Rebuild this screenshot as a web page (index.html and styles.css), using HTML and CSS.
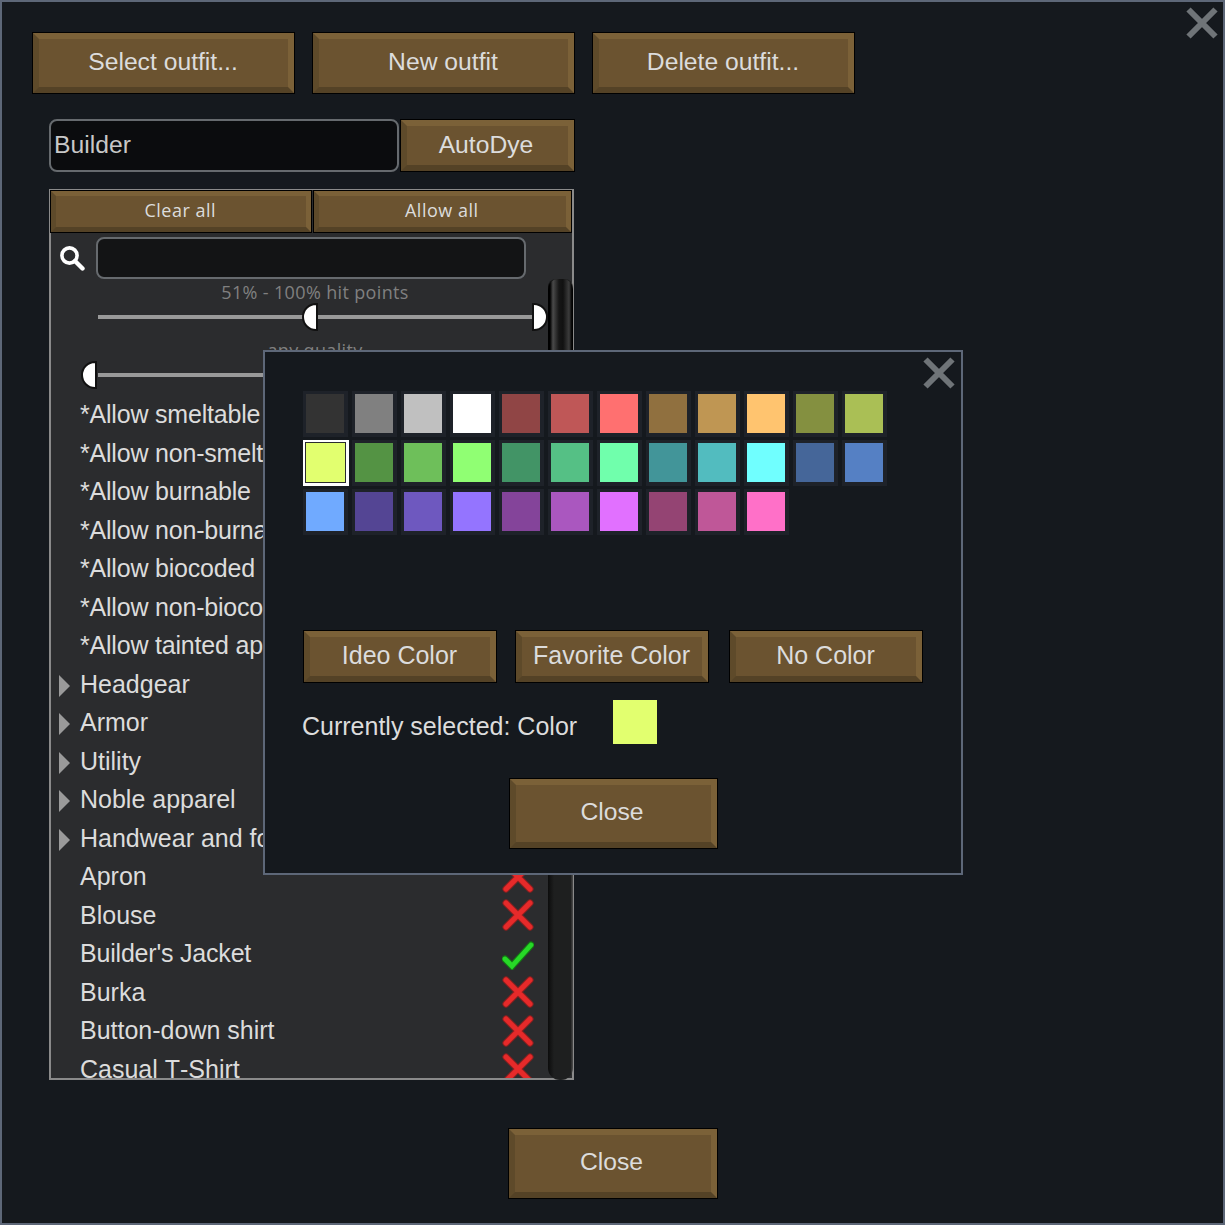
FILE: index.html
```html
<!DOCTYPE html>
<html lang="en">
<head>
<meta charset="utf-8">
<title>Outfits</title>
<link rel="stylesheet" href="styles.css">
</head>
<body>
<svg class="defs" width="0" height="0" aria-hidden="true">
  <defs>
    <symbol id="cross" viewBox="0 0 32 32">
      <path d="M4 4 L28 28 M28 4 L4 28" stroke="#8e1f1f" stroke-width="7" stroke-linecap="round" fill="none"/>
      <path d="M4 4 L28 28 M28 4 L4 28" stroke="#e62a2a" stroke-width="5" stroke-linecap="round" fill="none"/>
    </symbol>
    <symbol id="check" viewBox="0 0 32 32">
      <path d="M3 21 L10 28 L29 7" stroke="#137a13" stroke-width="7" stroke-linecap="round" stroke-linejoin="miter" fill="none"/>
      <path d="M3 21 L10 28 L29 7" stroke="#27d827" stroke-width="4.8" stroke-linecap="round" stroke-linejoin="miter" fill="none"/>
    </symbol>
    <symbol id="closex" viewBox="0 0 34 34">
      <path d="M3.5 3.5 L30.5 30.5 M30.5 3.5 L3.5 30.5" stroke="#6f7478" stroke-width="6" fill="none"/>
    </symbol>
    <symbol id="arrow" viewBox="0 0 11 22">
      <polygon points="0,0 11,11 0,22" fill="#9a9a9a"/>
    </symbol>
  </defs>
</svg>

<main class="window">
  <svg class="window-x"><use href="#closex"/></svg>

  <div class="top-row">
    <button class="btn btn-top">Select outfit...</button>
    <button class="btn btn-top">New outfit</button>
    <button class="btn btn-top">Delete outfit...</button>
  </div>

  <div class="name-row">
    <div class="name-field">Builder</div>
    <button class="btn btn-autodye">AutoDye</button>
  </div>

  <section class="panel">
    <div class="panel-actions">
      <button class="btn btn-small btn-clear">Clear all</button>
      <button class="btn btn-small btn-allow">Allow all</button>
    </div>
    <div class="search-row">
      <svg class="search-icon" viewBox="0 0 26 26">
        <circle cx="10.5" cy="10.5" r="7.6" fill="none" stroke="#fff" stroke-width="3.6"/>
        <path d="M16 16 L23.5 23.5" stroke="#fff" stroke-width="4.4" stroke-linecap="round"/>
      </svg>
      <div class="search-field"></div>
    </div>
    <div class="panel-body">
      <div class="tree">
        <div class="slider">
          <div class="slider-label">51% - 100% hit points</div>
          <div class="track">
            <span class="knob knob-left" style="left:46.2%"></span>
            <span class="knob knob-right" style="left:98.2%"></span>
          </div>
        </div>
        <div class="slider">
          <div class="slider-label">any quality</div>
          <div class="track">
            <span class="knob knob-left" style="left:-3.8%"></span>
          </div>
        </div>
        <div class="row tight"><span class="slot"></span><span class="label">*Allow smeltable apparel</span></div>
        <div class="row tight"><span class="slot"></span><span class="label">*Allow non-smeltable</span></div>
        <div class="row tight"><span class="slot"></span><span class="label">*Allow burnable</span></div>
        <div class="row tight"><span class="slot"></span><span class="label">*Allow non-burnable</span></div>
        <div class="row tight"><span class="slot"></span><span class="label">*Allow biocoded</span></div>
        <div class="row tight"><span class="slot"></span><span class="label">*Allow non-biocoded</span></div>
        <div class="row tight"><span class="slot"></span><span class="label">*Allow tainted apparel</span></div>
        <div class="row"><span class="slot"><svg class="arrow"><use href="#arrow"/></svg></span><span class="label">Headgear</span></div>
        <div class="row"><span class="slot"><svg class="arrow"><use href="#arrow"/></svg></span><span class="label">Armor</span></div>
        <div class="row"><span class="slot"><svg class="arrow"><use href="#arrow"/></svg></span><span class="label">Utility</span></div>
        <div class="row"><span class="slot"><svg class="arrow"><use href="#arrow"/></svg></span><span class="label">Noble apparel</span></div>
        <div class="row"><span class="slot"><svg class="arrow"><use href="#arrow"/></svg></span><span class="label">Handwear and footwear</span></div>
        <div class="row"><span class="slot"></span><span class="label">Apron</span><svg class="mark"><use href="#cross"/></svg></div>
        <div class="row"><span class="slot"></span><span class="label">Blouse</span><svg class="mark"><use href="#cross"/></svg></div>
        <div class="row tight"><span class="slot"></span><span class="label">Builder's Jacket</span><svg class="mark"><use href="#check"/></svg></div>
        <div class="row"><span class="slot"></span><span class="label">Burka</span><svg class="mark"><use href="#cross"/></svg></div>
        <div class="row"><span class="slot"></span><span class="label">Button-down shirt</span><svg class="mark"><use href="#cross"/></svg></div>
        <div class="row"><span class="slot"></span><span class="label">Casual T-Shirt</span><svg class="mark"><use href="#cross"/></svg></div>
      </div>
      <div class="scrollbar"><div class="thumb"></div></div>
    </div>
  </section>

  <div class="bottom-row">
    <button class="btn btn-close">Close</button>
  </div>

  <section class="modal">
    <svg class="modal-x"><use href="#closex"/></svg>
    <div class="swatches">
      <span class="cell"><i style="background:#333333"></i></span>
      <span class="cell"><i style="background:#808080"></i></span>
      <span class="cell"><i style="background:#c0c0c0"></i></span>
      <span class="cell"><i style="background:#ffffff"></i></span>
      <span class="cell"><i style="background:#904545"></i></span>
      <span class="cell"><i style="background:#bf5757"></i></span>
      <span class="cell"><i style="background:#ff7070"></i></span>
      <span class="cell"><i style="background:#90703f"></i></span>
      <span class="cell"><i style="background:#bf9653"></i></span>
      <span class="cell"><i style="background:#ffc46f"></i></span>
      <span class="cell"><i style="background:#849040"></i></span>
      <span class="cell"><i style="background:#aabf55"></i></span>
      <span class="cell cell-selected"><i style="background:#e2ff6f"></i></span>
      <span class="cell"><i style="background:#549344"></i></span>
      <span class="cell"><i style="background:#6ebf5a"></i></span>
      <span class="cell"><i style="background:#90ff73"></i></span>
      <span class="cell"><i style="background:#429466"></i></span>
      <span class="cell"><i style="background:#55c085"></i></span>
      <span class="cell"><i style="background:#70ffac"></i></span>
      <span class="cell"><i style="background:#429599"></i></span>
      <span class="cell"><i style="background:#52bcbf"></i></span>
      <span class="cell"><i style="background:#70ffff"></i></span>
      <span class="cell"><i style="background:#456699"></i></span>
      <span class="cell"><i style="background:#5580c4"></i></span>
      <span class="cell"><i style="background:#70aaff"></i></span>
      <span class="cell"><i style="background:#544594"></i></span>
      <span class="cell"><i style="background:#6e58bf"></i></span>
      <span class="cell"><i style="background:#9474ff"></i></span>
      <span class="cell"><i style="background:#84449a"></i></span>
      <span class="cell"><i style="background:#aa57bf"></i></span>
      <span class="cell"><i style="background:#e170ff"></i></span>
      <span class="cell"><i style="background:#944473"></i></span>
      <span class="cell"><i style="background:#bf5798"></i></span>
      <span class="cell"><i style="background:#ff70c8"></i></span>
    </div>
    <div class="modal-actions">
      <button class="btn btn-modal">Ideo Color</button>
      <button class="btn btn-modal">Favorite Color</button>
      <button class="btn btn-modal">No Color</button>
    </div>
    <div class="current">
      <span class="current-label">Currently selected: Color</span>
      <span class="current-swatch"></span>
    </div>
    <div class="modal-close">
      <button class="btn btn-close">Close</button>
    </div>
  </section>
</main>
</body>
</html>
```
FILE: styles.css
```css
* { box-sizing: border-box; }
html, body { margin: 0; padding: 0; }
body {
  width: 1225px;
  height: 1225px;
  overflow: hidden;
  background: #15191e;
  font-family: "Liberation Sans", Arial, sans-serif;
  font-kerning: none;
  color: #dcdcdc;
}
.defs { position: absolute; }

.window {
  position: relative;
  width: 1225px;
  height: 1225px;
  border: 2px solid #5d6778;
  background: #15191e;
  padding: 30px 0 0 30px;
}
.window-x { position: absolute; left: 1183px; top: 4px; width: 34px; height: 34px; }

/* Buttons */
.btn {
  display: flex;
  align-items: center;
  justify-content: center;
  margin: 0;
  padding: 0 3px 3px 0;
  font-family: inherit;
  font-size: 24.7px;
  font-kerning: none;
  color: #dcdcdc;
  background: #6b5330;
  border-style: solid;
  border-width: 7px;
  border-color: #7b6138 #7b6138 #544226 #5e4a2a;
  outline: 1px solid #000;
  outline-offset: -1px;
}

.top-row { display: flex; gap: 17px; }
.btn-top { width: 263px; height: 62px; padding-right: 1px; }

.name-row { display: flex; margin: 25px 0 0 17px; width: 526px; }
.name-field {
  width: 350px;
  height: 53px;
  margin-right: 1px;
  border: 2px solid #666a6e;
  border-radius: 8px;
  background: #0b0c0e;
  padding-left: 3px;
  font-size: 24.7px;
  line-height: 48px;
  color: #c8c8c8;
}
.btn-autodye { width: 175px; height: 53px; padding-bottom: 2px; }

/* Panel */
.panel {
  width: 525px;
  height: 891px;
  margin: 17px 0 0 17px;
  border: 2px solid #8a8a8a;
  border-top-width: 1px;
  background: #2b2c2e;
  display: flex;
  flex-direction: column;
}
.panel-actions { display: flex; height: 43px; flex: none; gap: 1px; margin-left: -1px; }
.btn-small {
  height: 43px;
  font-family: "Open Sans", sans-serif;
  font-size: 18px;
  letter-spacing: 0.5px;
  border-width: 6px;
  padding: 0 1px 4px 0;
}
.btn-clear { width: 262px; }
.btn-allow { width: 260px; }

.search-row { display: flex; height: 46px; flex: none; padding: 4px 0 0 8px; align-items: flex-start; }
.search-icon { width: 26px; height: 26px; margin: 8px 11px 0 0; flex: none; }
.search-field {
  width: 430px;
  height: 42px;
  border: 2px solid #666a6e;
  border-radius: 8px;
  background: #131415;
}

.panel-body { display: flex; flex: 1; min-height: 0; }
.tree { flex: none; width: 497px; overflow: hidden; }

.slider { height: 58px; margin-left: 47px; width: 442px; padding-top: 1px; }
.slider-label {
  height: 24px;
  line-height: 24px;
  margin-bottom: 11px;
  padding-right: 8px;
  text-align: center;
  font-family: "Open Sans", sans-serif;
  font-size: 18px;
  letter-spacing: 0.35px;
  color: #808080;
}
.track { position: relative; height: 4px; background: #999; }
.knob {
  position: absolute;
  top: -12px;
  width: 16px;
  height: 28px;
  background: #fff;
  border: 2px solid #111;
}
.knob-left { border-radius: 14px 0 0 14px; }
.knob-right { border-radius: 0 14px 14px 0; }

.slider + .row { margin-top: 0.25px; }
.row { display: flex; align-items: center; height: 38.5px; font-size: 25px; color: #dcdcdc; white-space: nowrap; }
.tight { letter-spacing: -0.2px; }
.slot { width: 29px; flex: none; padding-left: 8px; display: flex; }
.label { flex: 1; }
.arrow { width: 11px; height: 22px; margin-top: 3px; }
.mark { width: 32px; height: 32px; flex: none; margin-right: 14px; }

.scrollbar {
  flex: none;
  width: 25px;
  margin-bottom: -2px;
  margin-right: -1px;
  background: linear-gradient(90deg, #0c0c0c 0, #1e1f1f 6px, #1e1f1f 23px, #444 24px);
  border-radius: 8px 8px 12px 12px;
}
.thumb {
  height: 300px;
  border-radius: 10px 10px 0 0;
  background: linear-gradient(90deg, #000 0, #000 2px, #4a4a4a 5px, #161616 11px, #111 15px, #3c3c3c 21px, #000 24px);
}

.bottom-row { display: flex; width: 1165px; margin-top: 48px; padding-left: 476px; }
.btn-close { width: 210px; height: 71px; }

/* Modal */
.modal {
  position: absolute;
  left: 261px;
  top: 348px;
  width: 700px;
  height: 525px;
  border: 2px solid #5d6778;
  background: #15191e;
  padding: 39px 38px 0;
}
.modal-x { position: absolute; left: 657px; top: 4px; width: 34px; height: 34px; }

.swatches { display: grid; grid-template-columns: repeat(12, 45px); grid-auto-rows: 46px; column-gap: 4px; row-gap: 3px; height: 144px; }
.cell { background: #1e2229; padding: 3px 4px 3px 3px; display: block; }
.cell i { display: block; width: 38px; height: 39px; }
.cell-selected {
  width: 46px;
  border: 2px solid #fff;
  border-right-width: 3px;
  border-bottom-width: 3px;
  padding: 0;
  background: #2b2c2e;
}
.cell-selected i { width: 39px; height: 39px; margin: 1px 0 0 1px; }

.modal-actions { display: flex; gap: 18px; width: 620px; margin-top: 95px; }
.btn-modal { width: 194px; height: 53px; font-size: 25px; padding: 0 1px 2px 0; }
.btn-modal:last-child { margin-left: 2px; }

.current { display: flex; align-items: center; height: 44px; margin-top: 17px; }
.current-label { width: 311px; font-size: 25px; margin-left: -1px; padding-top: 8px; }
.current-swatch { width: 44px; height: 44px; background: #e2ff6f; }

.modal-close { display: flex; margin: 34px 0 0 206px; }
.modal-close .btn-close { width: 209px; }
```
